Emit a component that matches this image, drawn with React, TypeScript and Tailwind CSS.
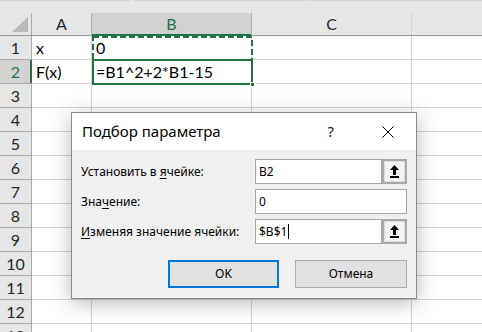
import React from "react";

const rows = [1, 2, 3, 4, 5, 6, 7, 8, 9, 10, 11, 12, 13];

const cellFont = { fontFamily: "Lato, 'Liberation Sans', sans-serif" };
const uiFont = { fontFamily: "'Noto Sans', 'Open Sans', sans-serif" };

function PickIcon() {
  return (
    <svg width="9" height="13" viewBox="0 0 9 13">
      <polygon points="4.5,0 0,5 9,5" fill="#000" />
      <rect x="3" y="5" width="3" height="5" fill="#000" />
      <rect x="0" y="11" width="9" height="2" fill="#000" />
    </svg>
  );
}

function RefButton() {
  return (
    <div className="flex h-full w-[25px] shrink-0 items-center justify-center border-2 border-[#a9a9a9] bg-[#dcdcdc] p-[1px]">
      <div className="flex h-full w-full items-center justify-center bg-[#f4f4f4]">
        <PickIcon />
      </div>
    </div>
  );
}

function Field({ value, picker, caret }: { value: string; picker?: boolean; caret?: boolean }) {
  return (
    <div className="flex h-[25px] w-[152px]">
      <div className="flex flex-1 items-center border border-[#a6a6a6] bg-white pl-[3px] text-[12px] text-black">
        {value}
        {caret && <span className="ml-[1px] inline-block h-[15px] w-[1px] bg-black" />}
      </div>
      {picker && <RefButton />}
    </div>
  );
}

export default function App() {
  return (
    <div className="relative h-[332px] w-[482px] overflow-hidden bg-white">
      {/* formula bar edge */}
      <div className="flex h-[13px] bg-[#e6e6e6]">
        <div className="h-[1px] w-[131px] bg-[#d2d2d2]" />
        <div className="h-[1px] w-[4px]" />
        <div className="h-[1px] w-[171px] bg-[#d2d2d2]" />
        <div className="h-[1px] w-[2px]" />
        <div className="h-[1px] flex-1 bg-[#d2d2d2]" />
      </div>

      {/* column headers */}
      <div className="flex h-[23px] border-b border-[#9b9b9b] bg-[#e6e6e6] text-[16px] text-[#262626]" style={cellFont}>
        <div className="relative w-[32px] shrink-0 border-r border-[#ababab]">
          <svg className="absolute bottom-[3px] right-[3px]" width="16" height="15" viewBox="0 0 16 15">
            <polygon points="16,0 16,15 0,15" fill="#b9b9b9" />
          </svg>
        </div>
        <div className="flex w-[60px] shrink-0 items-center justify-center border-r border-[#ababab]">A</div>
        <div className="relative flex w-[160px] shrink-0 items-center justify-center border-r border-[#ababab] bg-[#d2d2d2] text-[#217346]">
          B
          <div className="absolute -bottom-[1px] left-0 right-0 h-[2px] bg-[#217346]" />
        </div>
        <div className="flex w-[160px] shrink-0 items-center justify-center border-r border-[#d4d4d4]">C</div>
        <div className="flex-1" />
      </div>

      {/* rows */}
      {rows.map((r) => (
        <div key={r} className="flex h-[24px] text-[16px] text-black" style={cellFont}>
          <div
            className={
              r === 2
                ? "relative flex w-[32px] shrink-0 items-center justify-center border-b border-r border-[#ababab] bg-[#d2d2d2] text-[#217346]"
                : "flex w-[32px] shrink-0 items-center justify-center border-b border-r border-[#ababab] bg-[#e6e6e6] text-[#262626]"
            }
          >
            {r}
            {r === 2 && <div className="absolute -right-[1px] top-0 h-full w-[2px] bg-[#217346]" />}
          </div>
          <div className="flex w-[60px] shrink-0 items-center border-b border-r border-[#d4d4d4] pl-[4px]">
            {r === 1 ? "x" : r === 2 ? "F(x)" : ""}
          </div>
          <div className="flex w-[160px] shrink-0 items-center border-b border-r border-[#d4d4d4] pl-[4px]">
            {r === 1 ? "0" : r === 2 ? "=B1^2+2*B1-15" : ""}
          </div>
          <div className="w-[160px] shrink-0 border-b border-r border-[#d4d4d4]" />
          <div className="flex-1 border-b border-[#d4d4d4]" />
        </div>
      ))}

      {/* B1 copy marquee */}
      <svg className="absolute left-[92px] top-[36px]" width="161" height="25" viewBox="0 0 161 25">
        <rect x="1" y="1" width="159" height="23" fill="none" stroke="#217346" strokeWidth="2" strokeDasharray="6 3" />
      </svg>

      {/* active cell B2 */}
      <div className="absolute left-[92px] top-[59px] h-[26px] w-[161px] border-2 border-[#217346]" />
      <div className="absolute left-[250px] top-[82px] h-[5px] w-[5px] border border-white bg-[#217346]" />

      {/* Goal Seek dialog */}
      <div
        className="absolute left-[71px] top-[112px] flex h-[187px] w-[346px] flex-col border border-[#8a8a8a] bg-[#f0f0f0] shadow-[0_4px_20px_rgba(0,0,0,0.28)]"
        style={uiFont}
      >
        <div className="flex h-[37px] shrink-0 items-center bg-white pl-[10px] pr-[22px] text-[15px] text-black">
          <span className="flex-1">Подбор параметра</span>
          <span className="mr-[48px] text-[15px] text-[#222]">?</span>
          <svg width="12" height="12" viewBox="0 0 12 12">
            <path d="M0.5 0.5 L11.5 11.5 M11.5 0.5 L0.5 11.5" stroke="#000" strokeWidth="1" />
          </svg>
        </div>

        <div className="flex flex-1 flex-col px-[9px] pt-[9px] text-[12px] text-black">
          <div className="flex flex-col gap-[5px]">
            <div className="flex items-center justify-between">
              <span>
                Установить в <span className="underline underline-offset-2">я</span>чейке:
              </span>
              <Field value="B2" picker />
            </div>
            <div className="flex items-center justify-between">
              <span>
                Зна<span className="underline underline-offset-2">ч</span>ение:
              </span>
              <Field value="0" />
            </div>
            <div className="flex items-center justify-between">
              <span>
                <span className="underline underline-offset-2">И</span>зменяя значение ячейки:
              </span>
              <Field value="$B$1" picker caret />
            </div>
          </div>

          <div className="mt-[16px] flex justify-end gap-[16px]">
            <button className="flex h-[28px] w-[111px] items-center justify-center border-2 border-[#0078d7] bg-[#e1e1e1] text-[12px]">
              OK
            </button>
            <button className="flex h-[28px] w-[112px] items-center justify-center border border-[#adadad] bg-[#e1e1e1] text-[12px]">
              Отмена
            </button>
          </div>
        </div>
      </div>
    </div>
  );
}
